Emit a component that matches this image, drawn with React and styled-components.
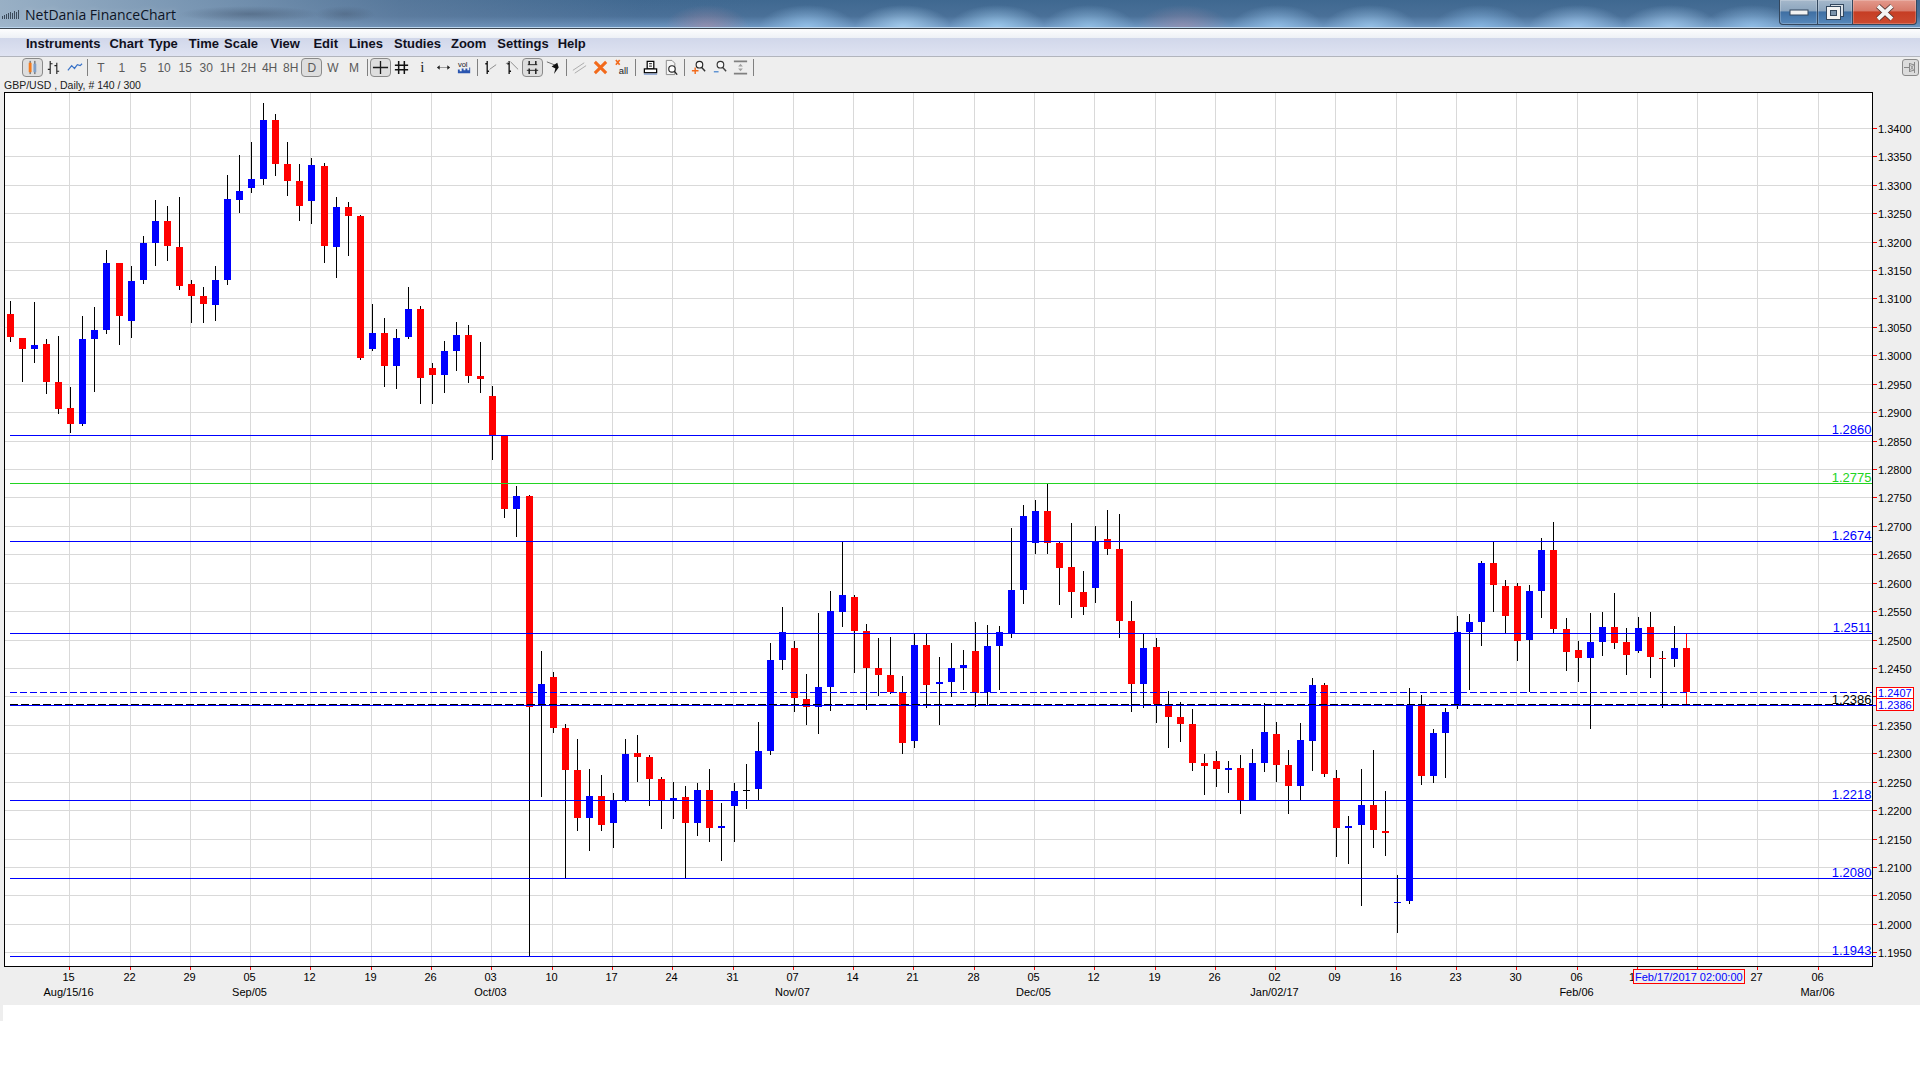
import React from 'react';
import styled, { createGlobalStyle } from 'styled-components';

const Global = createGlobalStyle`
  html, body { margin: 0; padding: 0; background: #fff; overflow: hidden; }
  #root { width: 1920px; height: 1080px; }
`;

const blob = (x, w, c) => `radial-gradient(ellipse ${w}px 22px at ${x}px 27px, ${c}, transparent)`;
const titleBackground = [
  blob(707, 42, 'rgba(170,140,165,.6)'),
  blob(807, 48, 'rgba(150,195,235,.9)'),
  blob(903, 48, 'rgba(165,205,238,.95)'),
  blob(997, 48, 'rgba(160,205,240,.9)'),
  blob(1089, 46, 'rgba(150,195,232,.85)'),
  blob(1183, 46, 'rgba(165,142,170,.6)'),
  blob(1277, 46, 'rgba(150,195,235,.85)'),
  blob(1370, 46, 'rgba(155,198,235,.85)'),
  blob(1480, 46, 'rgba(140,188,232,.8)'),
  blob(1577, 48, 'rgba(160,200,238,.9)'),
  blob(1670, 48, 'rgba(160,200,236,.9)'),
  blob(1752, 48, 'rgba(150,195,235,.85)'),
  'radial-gradient(ellipse 70px 8px at 250px 14px, rgba(70,90,115,.55), transparent)',
  'radial-gradient(ellipse 30px 8px at 345px 14px, rgba(70,90,115,.45), transparent)',
  'linear-gradient(90deg, rgba(168,188,206,.85) 0, rgba(140,165,190,.75) 190px, rgba(110,135,165,.5) 400px, rgba(80,110,150,.1) 640px, transparent 760px)',
  'linear-gradient(180deg, #3f6890 0, #4a7098 60%, #6d97c2 100%)',
].join(',');

const Page = styled.div`
  width: 1920px;
  display: flex;
  flex-direction: column;
  background: #fff;
  font-family: "Liberation Sans", Arial, sans-serif;
  position: relative;
`;

const TitleBar = styled.header`
  height: 28px;
  box-sizing: border-box;
  display: flex;
  align-items: flex-start;
  padding-left: 2px;
  background: ${titleBackground};
  border-bottom: 1px solid #bcd6ee;
  box-shadow: 0 1px 0 #3c4650;
`;

const AppIcon = styled.svg`
  width: 18px;
  height: 10px;
  margin-top: 9px;
`;

const TitleText = styled.span`
  margin: 6px 0 0 5px;
  font-family: "Open Sans", "Liberation Sans", sans-serif;
  font-size: 14px;
  line-height: 18px;
  color: #0c1526;
  text-shadow: 0 0 6px rgba(255, 255, 255, .35);
`;

const WindowButtons = styled.div`
  margin-left: auto;
  margin-right: 3px;
  display: flex;
  height: 25px;
`;

const WinButton = styled.div`
  width: ${p => p.$w}px;
  height: 25px;
  box-sizing: border-box;
  border: 1px solid #33475e;
  border-top: 0;
  border-left-width: ${p => (p.$first ? 1 : 0)}px;
  border-radius: ${p => (p.$first ? '0 0 0 4px' : p.$close ? '0 0 4px 0' : '0')};
  display: flex;
  align-items: center;
  justify-content: center;
  background: ${p =>
    p.$close
      ? 'linear-gradient(180deg,#e3998c 0,#d77a6a 45%,#c63d24 50%,#cc4a30 100%)'
      : 'linear-gradient(180deg,#a5b8cb 0,#8ca5be 45%,#3f6fa3 50%,#5788ba 100%)'};
  box-shadow: inset 0 0 0 1px rgba(255, 255, 255, .22);
`;

const MenuBar = styled.nav`
  margin-top: 1px;
  height: 27px;
  box-sizing: content-box;
  display: flex;
  align-items: center;
  padding: 0 0 0 26px;
  background: linear-gradient(180deg, #fdfdfe 0, #eef1f6 32%, #d1d7ea 34%, #dfe3f2 100%);
  border-bottom: 1px solid #b2b5bd;
`;

const MenuItem = styled.span`
  font-size: 13px;
  font-weight: 700;
  line-height: 15px;
  margin-top: 2px;
  margin-right: ${p => p.$gap}px;
  color: #101020;
  word-spacing: 1.5px;
`;

const ToolArea = styled.div`
  background: #eeeeee;
  height: 35px;
  position: relative;
`;

const Toolbar = styled.div`
  height: 21px;
  box-sizing: border-box;
  display: flex;
  align-items: center;
  padding: 1px 0 1px 22px;
`;

const Slot = styled.div`
  width: 21.1px;
  height: 19px;
  box-sizing: border-box;
  flex: none;
  display: flex;
  align-items: center;
  justify-content: center;
  border-radius: 4px;
  font-size: 12px;
  color: #5a5a5a;
  background: ${p => (p.$active ? '#dedede' : 'transparent')};
  border: 1px solid ${p => (p.$active ? '#8a8a8a' : 'transparent')};
`;

const InfoGlyph = styled.span`
  font-family: "Liberation Serif", serif;
  font-size: 15px;
  color: #222;
`;

const Separator = styled.div`
  width: 1px;
  height: 17px;
  flex: none;
  margin: 0 ${p => p.$after || 2}px 0 2px;
  background: #808080;
`;

const PinButton = styled.div`
  margin-left: auto;
  margin-right: 1px;
  width: 17px;
  height: 17px;
  box-sizing: border-box;
  border: 1px solid #8a8a8a;
  border-radius: 3px;
  background: #dcdcdc;
  display: flex;
  align-items: center;
  justify-content: center;
`;

const Info = styled.div`
  margin: 0 0 0 4px;
  padding-top: 1px;
  font-size: 10.5px;
  line-height: 13px;
  color: #202020;
`;

const ChartFrame = styled.section`
  background: #eeeeee;
  height: 913px;
`;

const ChartSvg = styled.svg`
  display: block;
  shape-rendering: crispEdges;
  font-family: "Liberation Sans", Arial, sans-serif;
`;

const AxisText = styled.text`
  font-size: 11px;
  fill: #000;
`;

const LevelText = styled.text`
  font-size: 13px;
  fill: ${p => p.$color};
  text-anchor: end;
`;

const ValueText = styled.text`
  font-size: 11px;
  fill: #0000ff;
`;

const Footer = styled.div`
  height: 16px;
  width: 3px;
  background: #eeeeee;
`;

const D = [
['r',301,314,337,342],['r',338,338,349,382],['b',302,345,349,363],['r',339,344,382,394],['r',336,382,409,414],
['r',387,408,424,433],['b',316,339,424,426],['b',307,330,339,392],['b',250,263,330,334],['r',263,263,316,345],
['b',266,281,321,338],['b',236,243,280,284],['b',200,221,243,266],['r',206,221,246,261],['r',197,247,286,290],
['r',280,284,296,323],['r',287,296,304,323],['b',266,280,305,321],['b',175,199,280,285],['b',155,191,200,213],
['b',142,179,188,193],['b',103,120,179,185],['r',114,120,164,176],['r',142,164,181,196],['r',164,181,206,221],
['b',158,165,201,224],['r',163,166,246,263],['b',197,207,247,278],['r',202,207,216,256],['r',215,216,358,360],
['b',304,333,349,351],['r',318,333,366,387],['b',329,338,366,389],['b',287,309,337,339],['r',306,309,378,404],
['r',363,368,375,404],['b',341,351,375,393],['b',322,335,351,371],['r',325,335,376,383],['r',342,376,379,393],
['r',386,396,435,460],['r',435,435,509,518],['b',486,496,509,537],['r',495,496,707,957],['b',651,684,704,797],
['r',672,677,728,733],['r',724,728,770,878],['r',739,770,818,831],['b',769,796,818,851],['r',775,796,825,831],
['b',793,800,823,848],['b',739,754,800,802],['r',735,753,757,782],['r',755,757,779,806],['r',777,779,800,829],
['b',782,798,800,819],['r',786,797,823,878],['b',783,790,823,836],['r',769,790,828,842],['b',803,826,828,861],
['b',783,791,806,842],['k',764,790,791,809],['b',722,751,789,800],['b',643,660,751,755],['b',607,632,660,670],
['r',641,648,698,712],['r',674,699,707,725],['b',613,687,707,734],['b',591,611,687,711],['b',542,595,612,627],
['r',595,597,631,673],['r',624,631,668,710],['r',638,668,675,696],['r',637,675,692,694],['r',676,692,743,754],
['b',634,645,741,748],['r',634,645,685,708],['b',657,682,684,725],['b',643,668,682,697],['b',650,665,668,690],
['r',622,651,693,707],['b',625,646,692,705],['b',626,632,646,690],['b',528,590,633,638],['b',505,516,590,604],
['b',500,511,543,554],['r',484,511,543,554],['r',542,543,568,605],['r',523,567,592,618],['r',571,592,607,615],
['b',526,541,588,603],['r',510,539,549,555],['r',514,549,621,638],['r',601,621,684,712],['b',633,648,684,708],
['r',638,647,704,723],['r',691,704,717,748],['r',702,717,724,742],['r',709,724,763,771],['r',754,763,766,795],
['r',751,761,769,787],['b',761,768,770,793],['r',755,768,800,814],['b',749,763,800,800],['b',703,732,763,772],
['r',722,734,765,782],['r',750,765,786,814],['b',723,740,786,800],['b',678,685,741,771],['r',683,685,774,777],
['r',770,778,828,857],['b',816,826,828,864],['b',769,805,825,906],['r',750,805,830,848],['r',791,831,833,856],
['b',875,902,903,933],['b',688,705,901,904],['r',695,704,776,785],['b',729,733,776,783],['b',708,712,733,778],
['b',616,632,705,709],['b',614,622,632,690],['b',561,563,622,646],['r',542,563,585,612],['r',580,586,616,633],
['r',583,586,641,661],['b',585,591,640,692],['b',538,550,591,618],['r',522,550,629,633],['r',618,629,652,671],
['r',641,650,658,682],['b',613,642,658,729],['b',612,627,642,656],['r',593,627,643,649],['r',628,642,655,675],
['b',617,628,651,653],['r',612,627,657,678],['r',651,658,659,708],['b',626,648,659,667],['w',634,648,692,705],
];

const STEPS = [9, 26, 43, 60, 77, 95, 112, 129, 146];
const barX = i => 10 + 12 * i + STEPS.filter(s => s <= i).length;
const BODY = { r: '#ff0000', b: '#0000ff', k: '#000000', w: '#ff0000' };

const weekLabels = ['15','22','29','05','12','19','26','03','10','17','24','31','07','14','21','28','05','12','19','26','02','09','16','23','30','06','13','20','27','06'];
const monthLabels = { 0: 'Aug/15/16', 3: 'Sep/05', 7: 'Oct/03', 12: 'Nov/07', 16: 'Dec/05', 20: 'Jan/02/17', 25: 'Feb/06', 29: 'Mar/06' };
const HIDDEN_WEEKS = [26, 27];
const gridXs = weekLabels.map((_, n) => barX(5 + 5 * n) - 1);
const gridYs = Array.from({ length: 30 }, (_, k) => Math.floor(128.3 + 28.43 * k));
const priceLabel = k => (1.34 - 0.005 * k).toFixed(4);

const levels = [
  { y: 435, label: '1.2860', color: '#0000ff' },
  { y: 483, label: '1.2775', color: '#22d422' },
  { y: 541, label: '1.2674', color: '#0000ff' },
  { y: 633, label: '1.2511', color: '#0000ff' },
  { y: 800, label: '1.2218', color: '#0000ff' },
  { y: 878, label: '1.2080', color: '#0000ff' },
  { y: 956, label: '1.1943', color: '#0000ff' },
];

function Chart() {
  return (
    <ChartSvg width="1920" height="913" viewBox="0 92 1920 913">
      <rect x="4.5" y="92.5" width="1868" height="874" fill="#fff" stroke="#000" />
      {gridXs.map(x => <rect key={x} x={x} y="93" width="1" height="873" fill="#d9d9d9" />)}
      {gridYs.map(y => <rect key={y} x="5" y={y} width="1867" height="1" fill="#d9d9d9" />)}
      {D.map(([c, hi, top, bot, lo], i) => {
        const x = barX(i);
        return (
          <g key={i}>
            <rect x={x} y={hi} width="1" height={lo - hi} fill={c === 'w' ? '#ff0000' : '#000'} />
            <rect x={x - 3} y={top} width="7" height={Math.max(bot - top, 1)} fill={BODY[c]} />
          </g>
        );
      })}
      <line x1="10" x2="1872" y1="692.5" y2="692.5" stroke="#0000ff" strokeDasharray="7 3" />
      <line x1="10" x2="1872" y1="704.5" y2="704.5" stroke="#000" strokeDasharray="8 3" />
      <rect x="10" y="705" width="1866" height="1" fill="#0000ff" />
      {levels.map(l => (
        <g key={l.label}>
          <rect x="10" y={l.y} width={l.y === 956 ? 1866 : 1862} height="1" fill={l.color} />
          <LevelText x="1871.5" y={l.y - 1} $color={l.color}>{l.label}</LevelText>
        </g>
      ))}
      <LevelText x="1871.5" y="704" $color="#000">1.2386</LevelText>
      <rect x="4" y="92" width="1" height="875" fill="#000" />
      {gridYs.map((y, k) => (
        <g key={y}>
          <rect x="1873" y={y} width="4" height="1" fill="#ff0000" />
          <AxisText x="1878" y={y + 5}>{priceLabel(k)}</AxisText>
        </g>
      ))}
      {gridXs.map((x, n) => (
        <g key={x}>
          <rect x={x} y="967" width="1" height="3" fill="#ff0000" />
          {!HIDDEN_WEEKS.includes(n) && <AxisText x={x - 0.5} y="981" textAnchor="middle">{weekLabels[n]}</AxisText>}
          {monthLabels[n] && <AxisText x={x - 0.5} y="996" textAnchor="middle">{monthLabels[n]}</AxisText>}
        </g>
      ))}
      <AxisText x="1629" y="981">1</AxisText>
      <rect x="1876.5" y="687.5" width="37" height="11" fill="#fff" stroke="#ff0000" />
      <rect x="1876.5" y="698.5" width="37" height="12" fill="#fff" stroke="#ff0000" />
      <ValueText x="1878" y="697">1.2407</ValueText>
      <ValueText x="1878" y="708.5">1.2386</ValueText>
      <rect x="1633.5" y="969.5" width="111" height="14" fill="#eeeeee" stroke="#ff0000" />
      <ValueText x="1635" y="981">Feb/17/2017 02:00:00</ValueText>
    </ChartSvg>
  );
}

const Ico = ({ children }) => (
  <svg width="17" height="17" viewBox="0 0 18 18" fill="none">{children}</svg>
);

const CandleIcon = () => (
  <Ico>
    <path d="M6.5 2v14" stroke="#444" /><rect x="5" y="4" width="3" height="10" fill="#f47a1c" />
    <path d="M11.5 2v14" stroke="#444" /><rect x="10" y="5" width="3" height="9" fill="#7f9fc8" />
  </Ico>
);
const BarsIcon = () => (
  <Ico>
    <path d="M5.5 2v14M3 11h2.5M5.5 5H8M12.5 4v12M10 7h2.5M12.5 13H15" stroke="#222" strokeWidth="1.2" />
  </Ico>
);
const LineIcon = () => <Ico><path d="M2 12l4-5 3 3 3-4 3 1 2-2" stroke="#3a73c8" strokeWidth="1.3" /></Ico>;
const CrossIcon = () => <Ico><path d="M9 2v14M1 9h16" stroke="#1a1a1a" strokeWidth="1.4" /></Ico>;
const HashIcon = () => <Ico><path d="M6 2v14M12 2v14M2 6.5h14M2 11.5h14" stroke="#111" strokeWidth="1.6" /></Ico>;
const ArrowsIcon = () => <Ico><path d="M3 9h12" stroke="#999" /><path d="M2 9l3-2.5v5zM16 9l-3-2.5v5z" fill="#222" /></Ico>;
const VolIcon = () => (
  <Ico>
    <text x="2" y="8" fontSize="8" fill="#222" fontFamily="Liberation Sans">vol</text>
    <path d="M2 15v-4h2v2h2v-3h2v2h2v-2h2v2h2v-3h1v6z" fill="#2a55b0" />
  </Ico>
);
const TrendA = () => <Ico><path d="M5.5 2v14M3.5 5h2M5.5 13h2" stroke="#111" strokeWidth="1.4" /><path d="M8 11l7-5" stroke="#888" /></Ico>;
const TrendB = () => <Ico><path d="M6.5 2v14M4.5 5h2M6.5 13h2" stroke="#111" strokeWidth="1.4" /><path d="M3 5l4-2M8 3l8 8" stroke="#888" /></Ico>;
const TrendC = () => (
  <Ico>
    <path d="M4 6h10" stroke="#222" /><path d="M3 12h12" stroke="#222" />
    <path d="M5.5 2v4M12.5 2v4M5.5 10v6M12.5 10v6" stroke="#222" strokeWidth="1.6" />
  </Ico>
);
const PointerIcon = () => <Ico><path d="M2 3l10 4" stroke="#666" /><path d="M13 4l1.5 5-5 7 1.5-6-4-2z" fill="#111" /></Ico>;
const DiagIcon = () => <Ico><path d="M2 12L14 4M4 15l12-8" stroke="#a8a8a8" /></Ico>;
const OrangeX = () => <Ico><path d="M3 3l12 12M15 3L3 15" stroke="#f26a1b" strokeWidth="3.2" /></Ico>;
const AllIcon = () => (
  <Ico>
    <path d="M2 1l4 5M6 1L2 6" stroke="#f26a1b" strokeWidth="1.8" />
    <text x="5" y="16" fontSize="10" fill="#222" fontFamily="Liberation Sans">all</text>
  </Ico>
);
const PrintIcon = () => (
  <Ico>
    <rect x="5.5" y="2.5" width="7" height="8" stroke="#000" strokeWidth="1.3" fill="#fff" />
    <path d="M7.5 5h3M7.5 7.5h3" stroke="#000" />
    <rect x="2.5" y="10.5" width="13" height="4" stroke="#000" strokeWidth="1.3" fill="#fff" />
    <path d="M2 16h14" stroke="#5b7fc0" />
  </Ico>
);
const PreviewIcon = () => (
  <Ico>
    <path d="M3.5 1.5h6l3 3v12h-9z" stroke="#888" fill="#f5f5f5" />
    <circle cx="9.5" cy="10.5" r="3.4" stroke="#222" strokeWidth="1.2" fill="#fff" />
    <path d="M12 13l3 3.5" stroke="#222" strokeWidth="1.4" />
  </Ico>
);
const ZoomIn = () => (
  <Ico>
    <circle cx="10" cy="6" r="3.5" stroke="#222" strokeWidth="1.2" fill="#f8f8f8" />
    <path d="M12.5 9l3.5 4" stroke="#333" strokeWidth="1.5" />
    <path d="M5.5 9v7M2 12.5h7" stroke="#f26a1b" strokeWidth="1.5" />
  </Ico>
);
const ZoomOut = () => (
  <Ico>
    <circle cx="10" cy="6" r="3.5" stroke="#333" strokeWidth="1.2" fill="#f8f8f8" />
    <path d="M12.5 9l3.5 4" stroke="#444" strokeWidth="1.5" />
    <path d="M3 13.5h5" stroke="#5a90d0" strokeWidth="1.5" />
  </Ico>
);
const FitIcon = () => (
  <Ico>
    <path d="M2 2.5h14M2 15.5h14" stroke="#808080" strokeWidth="2" />
    <path d="M9 5l-2.5 3h5zM9 13l-2.5-3h5z" fill="#a0a0a0" />
  </Ico>
);
const PinIcon = () => (
  <svg width="13" height="13" viewBox="0 0 13 13" fill="none">
    <path d="M0 6.5h5M5.5 2v9M5.5 2.5l5 1.5v5l-5 1.5M10.5 1v11" stroke="#888" />
    <path d="M6.5 4l3 5M9.5 4l-3 5" stroke="#999" />
  </svg>
);

const menus = [
  ['Instruments', 9], ['Chart Type', 11], ['Time Scale', 12.5], ['View', 13.5], ['Edit', 11],
  ['Lines', 11], ['Studies', 10], ['Zoom', 11], ['Settings', 9], ['Help', 0],
];
const periods = ['T', '1', '5', '10', '15', '30', '1H', '2H', '4H', '8H', 'D', 'W', 'M'];

export default function App() {
  return (
    <Page>
      <Global />
      <TitleBar>
        <AppIcon viewBox="0 0 18 10">
          {[7, 6, 5, 4, 3, 4, 2, 3, 1].map((top, i) => (
            <rect key={i} x={i * 2} y={top} width="1" height={10 - top} fill="#3b4a5a" />
          ))}
        </AppIcon>
        <TitleText>NetDania FinanceChart</TitleText>
        <WindowButtons>
          <WinButton $w={39} $first>
            <svg width="20" height="7" viewBox="0 0 20 7"><rect x="1" y="1" width="18" height="5" fill="#f2f2f2" stroke="#33475e" /></svg>
          </WinButton>
          <WinButton $w={35}>
            <svg width="20" height="18" viewBox="0 0 20 18" fill="none">
              <rect x="5.5" y="1.5" width="13" height="12" fill="#d8dfe6" stroke="#33475e" />
              <rect x="1.5" y="3.5" width="14" height="13" fill="#f2f2f2" stroke="#33475e" />
              <rect x="5.5" y="7.5" width="6" height="5" fill="#7a93ad" stroke="#33475e" />
            </svg>
          </WinButton>
          <WinButton $w={64} $close>
            <svg width="20" height="17" viewBox="0 0 20 17" fill="none">
              <path d="M3 2l14 13M17 2L3 15" stroke="#4b2d2a" strokeWidth="5.4" />
              <path d="M3 2l14 13M17 2L3 15" stroke="#f4f4f4" strokeWidth="3.8" />
            </svg>
          </WinButton>
        </WindowButtons>
      </TitleBar>
      <MenuBar>
        {menus.map(([m, gap]) => <MenuItem key={m} $gap={gap}>{m}</MenuItem>)}
      </MenuBar>
      <ToolArea>
        <Toolbar>
          <Slot $active><CandleIcon /></Slot>
          <Slot><BarsIcon /></Slot>
          <Slot><LineIcon /></Slot>
          <Separator />
          {periods.map(p => <Slot key={p} $active={p === 'D'}>{p}</Slot>)}
          <Separator />
          <Slot $active><CrossIcon /></Slot>
          <Slot><HashIcon /></Slot>
          <Slot><InfoGlyph>i</InfoGlyph></Slot>
          <Slot><ArrowsIcon /></Slot>
          <Slot><VolIcon /></Slot>
          <Separator />
          <Slot><TrendA /></Slot>
          <Slot><TrendB /></Slot>
          <Slot $active><TrendC /></Slot>
          <Slot><PointerIcon /></Slot>
          <Separator />
          <Slot><DiagIcon /></Slot>
          <Slot><OrangeX /></Slot>
          <Slot><AllIcon /></Slot>
          <Separator $after={4} />
          <Slot><PrintIcon /></Slot>
          <Slot><PreviewIcon /></Slot>
          <Separator $after={3} />
          <Slot><ZoomIn /></Slot>
          <Slot><ZoomOut /></Slot>
          <Slot><FitIcon /></Slot>
          <Separator />
          <PinButton><PinIcon /></PinButton>
        </Toolbar>
        <Info>GBP/USD , Daily, # 140 / 300</Info>
      </ToolArea>
      <ChartFrame><Chart /></ChartFrame>
      <Footer />
    </Page>
  );
}
